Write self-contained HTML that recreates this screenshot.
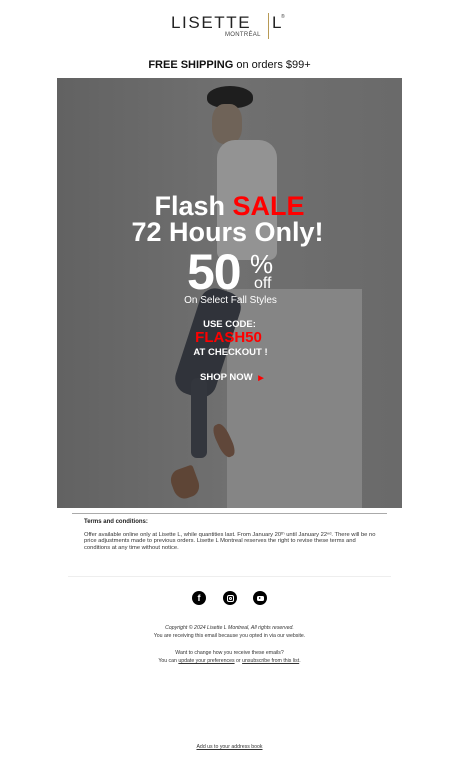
<!DOCTYPE html>
<html><head><meta charset="utf-8"><style>
*{margin:0;padding:0;box-sizing:border-box}
body{width:459px;height:768px;background:#fff;position:relative;overflow:hidden;font-family:"Liberation Sans",sans-serif;color:#222}
.a{position:absolute}
.c{position:absolute;left:0;width:459px;text-align:center}
.hero{left:57px;top:78px;width:345px;height:430px;background:#6c6c6c;overflow:hidden}
.w{color:#fff;font-weight:bold}
.r{color:#f00}
.sm{font-size:5.2px;color:#333;line-height:7.5px}
</style></head><body>
<div class="a" style="left:171px;top:13px;font-size:17px;letter-spacing:1.6px;color:#222">LISETTE</div>
<div class="a" style="left:268px;top:13px;width:1px;height:26px;background:#b89a55"></div>
<div class="a" style="left:272px;top:13px;font-size:17px;color:#222">L</div>
<div class="a" style="left:281px;top:14px;font-size:5px;color:#444">®</div>
<div class="a" style="left:225px;top:32px;font-size:6px;color:#444;letter-spacing:.3px">MONTRÉAL</div>
<div class="c" style="top:59px;font-size:11px;color:#111"><b>FREE SHIPPING</b> on orders $99+</div>
<div class="a hero">
 <div class="a" style="left:0;top:0;width:345px;height:430px;background:linear-gradient(90deg,#626262,#707070 50%,#6a6a6a)"></div>
 <div class="a" style="left:170px;top:211px;width:135px;height:219px;background:#858585"></div>
 <div class="a" style="left:150px;top:8px;width:46px;height:22px;border-radius:50% 50% 40% 40%;background:#1e1e1e"></div>
 <div class="a" style="left:155px;top:26px;width:30px;height:40px;background:#6f6358;border-radius:40%"></div>
 <div class="a" style="left:160px;top:62px;width:60px;height:120px;background:#939393;border-radius:18px 18px 8px 8px"></div>
 <div class="a" style="left:130px;top:210px;width:42px;height:110px;background:#30333a;transform:rotate(18deg);border-radius:16px"></div>
 <div class="a" style="left:134px;top:300px;width:16px;height:80px;background:#33363d;border-radius:6px"></div>
 <div class="a" style="left:115px;top:390px;width:26px;height:30px;background:#5e4536;border-radius:40% 10% 40% 40%;transform:rotate(-20deg)"></div>
 <div class="a" style="left:160px;top:345px;width:14px;height:35px;background:#60473a;border-radius:40%;transform:rotate(-25deg)"></div>
</div>
<div class="c w" style="top:191px;font-size:27px;line-height:30px">Flash <span class="r">SALE</span></div>
<div class="c w" style="top:217px;font-size:27px;line-height:30px;left:-2px">72 Hours Only!</div>
<div class="a w" style="left:187px;top:246px;font-size:50px;line-height:52px;letter-spacing:-1px">50</div>
<div class="a" style="left:250px;top:250px;font-size:26px;color:#fff;line-height:28px">%</div>
<div class="a" style="left:254px;top:275px;font-size:16px;color:#fff;line-height:18px">off</div>
<div class="c" style="top:295px;font-size:10px;color:#fff;left:1px">On Select Fall Styles</div>
<div class="c w" style="top:319px;font-size:9.5px">USE CODE:</div>
<div class="c r" style="top:329px;font-size:15px;font-weight:bold;left:-1px">FLASH50</div>
<div class="c w" style="top:347px;font-size:9.5px;left:1px">AT CHECKOUT !</div>
<div class="a w" style="left:200px;top:372px;font-size:9.5px">SHOP NOW <span class="r" style="font-size:7px;margin-left:3px">▶</span></div>
<div class="a" style="left:72px;top:513px;width:315px;height:1px;background:#aaa"></div>
<div class="a" style="left:84px;top:519px;font-size:6px;font-weight:bold;color:#222">Terms and conditions:</div>
<div class="a" style="left:84px;top:532px;width:296px;font-size:5.8px;color:#333;line-height:6.3px">Offer available online only at Lisette L, while quantities last. From January 20ᵗʰ until January 22ⁿᵈ. There will be no price adjustments made to previous orders. Lisette L Montreal reserves the right to revise these terms and conditions at any time without notice.</div>
<div class="a" style="left:68px;top:576px;width:323px;height:1px;background:#eee"></div>
<div class="a" style="left:192px;top:591px;width:14px;height:14px;border-radius:50%;background:#000;color:#fff;font-size:9px;font-weight:bold;text-align:center;line-height:15px">f</div>
<div class="a" style="left:223px;top:591px;width:14px;height:14px;border-radius:50%;background:#000"><div class="a" style="left:3.5px;top:3.5px;width:7px;height:7px;border:1px solid #fff;border-radius:2px"></div><div class="a" style="left:5.5px;top:5.5px;width:3px;height:3px;border:1px solid #fff;border-radius:50%"></div></div>
<div class="a" style="left:253px;top:591px;width:14px;height:14px;border-radius:50%;background:#000"><div class="a" style="left:3.5px;top:4.5px;width:7px;height:5px;background:#fff;border-radius:1.5px"></div><div class="a" style="left:6px;top:5.5px;width:0;height:0;border-left:2.5px solid #000;border-top:1.5px solid transparent;border-bottom:1.5px solid transparent"></div></div>
<div class="c sm" style="top:625px"><i>Copyright © 2024 Lisette L Montreal, All rights reserved.</i></div>
<div class="c sm" style="top:633px">You are receiving this email because you opted in via our website.</div>
<div class="c sm" style="top:650px">Want to change how you receive these emails?</div>
<div class="c sm" style="top:658px">You can <u>update your preferences</u> or <u>unsubscribe from this list</u>.</div>
<div class="c sm" style="top:744px"><u>Add us to your address book</u></div>
</body></html>
